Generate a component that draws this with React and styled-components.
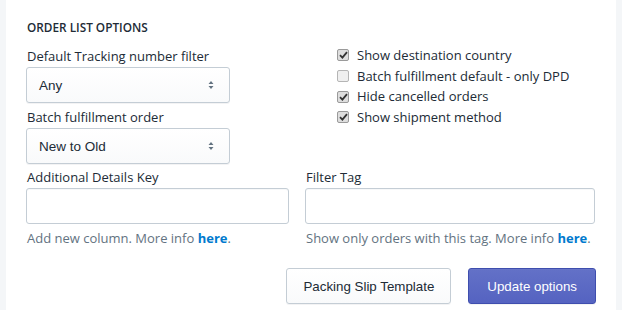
import React from "react";
import styled, { createGlobalStyle } from "styled-components";

const GlobalStyle = createGlobalStyle`
  body {
    margin: 0;
    background: #f4f6f8;
    font-family: "Open Sans", "Noto Sans", sans-serif;
    color: #212b36;
  }
`;

const Card = styled.section`
  margin-left: 6px;
  width: 610px;
  height: 310px;
  box-sizing: border-box;
  background: #fff;
  padding: 19px 20px 0 20px;
`;

const Heading = styled.h2`
  margin: 0 0 11px 1px;
  font-size: 11.8px;
  line-height: 16px;
  font-weight: 600;
  text-transform: uppercase;
  color: #212b36;
`;

const TopRow = styled.div`
  display: grid;
  grid-template-columns: 204px 1fr;
  column-gap: 107px;
`;

const Stack = styled.div`
  display: flex;
  flex-direction: column;
  gap: 4px;
`;

const Field = styled.div`
  display: flex;
  flex-direction: column;
`;

const Label = styled.label`
  font-size: 13px;
  line-height: 20px;
  padding-left: 1px;
  margin-bottom: 1px;
  color: #212b36;
`;

const SelectBox = styled.div`
  height: 36px;
  box-sizing: border-box;
  border: 1px solid #c4cdd5;
  border-radius: 3px;
  background: linear-gradient(180deg, #fff, #f9fafb);
  box-shadow: 0 1px 0 0 rgba(22, 29, 37, 0.05);
  display: flex;
  align-items: center;
  padding: 0 12px;
  font-family: "Liberation Sans", Arial, sans-serif;
  font-size: 13.5px;
  color: #212b36;
`;

const Arrows = styled.svg`
  margin-left: auto;
  margin-right: 3px;
`;

const TextInput = styled.div`
  height: 36px;
  box-sizing: border-box;
  border: 1px solid #c4cdd5;
  border-radius: 3px;
  background: #fff;
  box-shadow: inset 0 1px 0 0 rgba(99, 115, 129, 0.05);
`;

const CheckList = styled.div`
  display: flex;
  flex-direction: column;
  margin-top: -1px;
`;

const CheckRow = styled.label`
  display: flex;
  align-items: center;
  gap: 8px;
  font-size: 13px;
  line-height: 20.7px;
  color: #212b36;
`;

const Box = styled.span`
  width: 12px;
  height: 12px;
  box-sizing: border-box;
  border: 1px solid ${(p) => (p.$checked ? "#9a9a9a" : "#b5b5b5")};
  border-radius: 2px;
  background: ${(p) => (p.$checked ? "#dedede" : "#efefef")};
  display: flex;
  align-items: center;
  justify-content: center;
`;

const BottomRow = styled.div`
  display: grid;
  grid-template-columns: 263px 290px;
  column-gap: 16px;
  margin-top: 3px;
`;

const Help = styled.p`
  margin: 4px 0 0 1px;
  font-size: 13px;
  line-height: 20px;
  color: #637381;
  white-space: nowrap;

  a {
    color: #007ace;
    font-weight: 700;
    text-decoration: none;
  }
`;

const Actions = styled.div`
  display: flex;
  justify-content: flex-end;
  gap: 17px;
  margin-top: 20px;
`;

const Button = styled.button`
  height: 36px;
  box-sizing: border-box;
  padding: 0 ${(p) => (p.$primary ? "18px" : "16px")};
  border-radius: 3px;
  font-family: "Liberation Sans", Arial, sans-serif;
  font-size: 13.33px;
  cursor: pointer;
  border: 1px solid ${(p) => (p.$primary ? "#3f4eae" : "#c4cdd5")};
  color: ${(p) => (p.$primary ? "#fff" : "#212b36")};
  background: ${(p) =>
    p.$primary
      ? "linear-gradient(180deg, #6371c7, #5563c1)"
      : "linear-gradient(180deg, #fff, #f9fafb)"};
  box-shadow: ${(p) =>
    p.$primary
      ? "inset 0 1px 0 0 #6774c8, 0 1px 0 0 rgba(22, 29, 37, 0.05)"
      : "0 1px 0 0 rgba(22, 29, 37, 0.05)"};
`;

const Select = ({ value }) => (
  <SelectBox>
    {value}
    <Arrows width="6" height="10" viewBox="0 0 6 10">
      <path d="M3 1 L5.5 4 H0.5 Z M3 9 L5.5 6 H0.5 Z" fill="#637381" />
    </Arrows>
  </SelectBox>
);

const Check = ({ checked, children }) => (
  <CheckRow>
    <Box $checked={checked}>
      {checked && (
        <svg width="9" height="8" viewBox="0 0 9 8">
          <path d="M1 4.2 L3.4 6.6 L8 1.2" stroke="#333" strokeWidth="1.8" fill="none" />
        </svg>
      )}
    </Box>
    {children}
  </CheckRow>
);

export default function App() {
  return (
    <>
      <GlobalStyle />
      <Card>
        <Heading>Order list options</Heading>
        <TopRow>
          <Stack>
            <Field>
              <Label>Default Tracking number filter</Label>
              <Select value="Any" />
            </Field>
            <Field>
              <Label>Batch fulfillment order</Label>
              <Select value="New to Old" />
            </Field>
          </Stack>
          <CheckList>
            <Check checked>Show destination country</Check>
            <Check>Batch fulfillment default - only DPD</Check>
            <Check checked>Hide cancelled orders</Check>
            <Check checked>Show shipment method</Check>
          </CheckList>
        </TopRow>
        <BottomRow>
          <Field>
            <Label>Additional Details Key</Label>
            <TextInput />
            <Help>
              Add new column. More info <a href="#">here</a>.
            </Help>
          </Field>
          <Field>
            <Label>Filter Tag</Label>
            <TextInput />
            <Help>
              Show only orders with this tag. More info <a href="#">here</a>.
            </Help>
          </Field>
        </BottomRow>
        <Actions>
          <Button>Packing Slip Template</Button>
          <Button $primary>Update options</Button>
        </Actions>
      </Card>
    </>
  );
}
